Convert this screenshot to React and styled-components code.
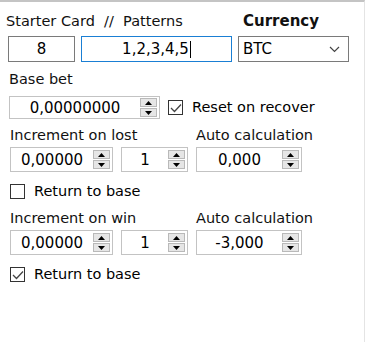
import styled, { createGlobalStyle } from "styled-components";

const Global = createGlobalStyle`
  html, body {
    margin: 0;
    padding: 0;
    background: #ffffff;
  }
  body {
    font-family: "DejaVu Sans", "Noto Sans", sans-serif;
    font-size: 14.5px;
    color: #000000;
  }
`;

export default function App() {
  return (
    <>
      <Global />
      <Panel>
        <TopLabels>
          <Label>Starter Card&nbsp;&nbsp;//&nbsp;&nbsp;Patterns</Label>
          <BoldLabel>Currency</BoldLabel>
        </TopLabels>
        <TopRow>
          <TextBox width={67}>8</TextBox>
          <TextBox width={151} focused>
            1,2,3,4,5<Caret />
          </TextBox>
          <Select>
            <span>BTC</span>
            <svg width="11" height="7" viewBox="0 0 11 7">
              <path d="M1 1 L5.5 5.5 L10 1" fill="none" stroke="#444" strokeWidth="1.2" />
            </svg>
          </Select>
        </TopRow>

        <Section indent={9}>
          <Label gap={9}>Base bet</Label>
          <Row top={8} height={23}>
            <Spin width={151} height={23} value="0,00000000" />
            <Check checked label="Reset on recover" />
          </Row>
        </Section>

        <Section indent={10}>
          <SplitLabels>
            <Label gap={8}>Increment on lost</Label>
            <Label gap={8}>Auto calculation</Label>
          </SplitLabels>
          <Row top={3} height={25}>
            <Spin width={103} value="0,00000" />
            <Spin width={67} value="1" />
            <Spin width={106} value="0,000" />
          </Row>
          <CheckRow>
            <Check label="Return to base" />
          </CheckRow>
        </Section>

        <Section indent={10}>
          <SplitLabels>
            <Label gap={10}>Increment on win</Label>
            <Label gap={10}>Auto calculation</Label>
          </SplitLabels>
          <Row top={3} height={25}>
            <Spin width={103} value="0,00000" />
            <Spin width={67} value="1" />
            <Spin width={106} value="-3,000" />
          </Row>
          <CheckRow>
            <Check checked label="Return to base" />
          </CheckRow>
        </Section>
      </Panel>
    </>
  );
}

function Spin({ width, height = 25, value }) {
  return (
    <SpinBox width={width} height={height}>
      <SpinValue>{value}</SpinValue>
      <SpinButtons>
        <SpinHalf>
          <svg width="7" height="4" viewBox="0 0 7 4">
            <path d="M0 4 L3.5 0 L7 4 Z" fill="#000" />
          </svg>
        </SpinHalf>
        <SpinHalf>
          <svg width="7" height="4" viewBox="0 0 7 4">
            <path d="M0 0 L3.5 4 L7 0 Z" fill="#000" />
          </svg>
        </SpinHalf>
      </SpinButtons>
    </SpinBox>
  );
}

function Check({ checked, label }) {
  return (
    <CheckWrap>
      <Box>
        {checked && (
          <svg width="12" height="10" viewBox="0 0 12 10">
            <path d="M1 5 L4.5 8.5 L11 1.5" fill="none" stroke="#444" strokeWidth="1.3" />
          </svg>
        )}
      </Box>
      <span>{label}</span>
    </CheckWrap>
  );
}

const Panel = styled.div`
  width: 365px;
  height: 342px;
  border-top: 2px solid #c4c4c4;
  border-right: 1px solid #e4e4e4;
  box-sizing: border-box;
  padding-top: 8px;
`;

const TopLabels = styled.div`
  display: grid;
  grid-template-columns: 237px auto;
  padding-left: 6px;
  height: 22px;
  align-items: center;
`;

const Label = styled.div`
  line-height: 17px;
  color: #111;
  white-space: nowrap;
  margin-top: ${(p) => p.gap || 0}px;
`;

const BoldLabel = styled(Label)`
  font-weight: bold;
  font-size: 15px;
`;

const TopRow = styled.div`
  display: flex;
  gap: 6px;
  padding-left: 8px;
  margin-top: 4px;
`;

const TextBox = styled.div`
  width: ${(p) => p.width}px;
  height: 26px;
  box-sizing: border-box;
  border: 1px solid ${(p) => (p.focused ? "#1a7fd4" : "#7a7a7a")};
  display: flex;
  align-items: center;
  justify-content: center;
  font-size: 15px;
`;

const Caret = styled.span`
  display: inline-block;
  width: 1px;
  height: 17px;
  background: #000;
  margin-left: 1px;
`;

const Select = styled.div`
  width: 111px;
  height: 26px;
  box-sizing: border-box;
  border: 1px solid #7a7a7a;
  display: flex;
  align-items: center;
  justify-content: space-between;
  padding: 0 8px 0 4px;
  font-size: 15px;
`;

const Section = styled.div`
  padding-left: ${(p) => p.indent}px;
  display: flex;
  flex-direction: column;
`;

const SplitLabels = styled.div`
  display: grid;
  grid-template-columns: 186px auto;
`;

const Row = styled.div`
  display: flex;
  align-items: center;
  gap: 8px;
  margin-top: ${(p) => p.top}px;
  height: ${(p) => p.height}px;
`;

const CheckRow = styled.div`
  margin-top: 11px;
`;

const SpinBox = styled.div`
  width: ${(p) => p.width}px;
  height: ${(p) => p.height}px;
  box-sizing: border-box;
  border: 1px solid #c3c3c3;
  display: flex;
  align-items: center;
  padding-right: 2px;
  flex-shrink: 0;
`;

const SpinValue = styled.div`
  flex: 1;
  text-align: center;
  font-size: 15px;
`;

const SpinButtons = styled.div`
  width: 17px;
  height: 19px;
  display: flex;
  flex-direction: column;
  gap: 1px;
`;

const SpinHalf = styled.div`
  flex: 1;
  background: #e6e6e6;
  border: 1px solid #b9b9b9;
  display: flex;
  align-items: center;
  justify-content: center;
`;

const CheckWrap = styled.div`
  display: flex;
  align-items: center;
  gap: 9px;
  line-height: 17px;
`;

const Box = styled.div`
  width: 13px;
  height: 13px;
  border: 1px solid #333;
  display: flex;
  align-items: center;
  justify-content: center;
  background: #fff;
`;
